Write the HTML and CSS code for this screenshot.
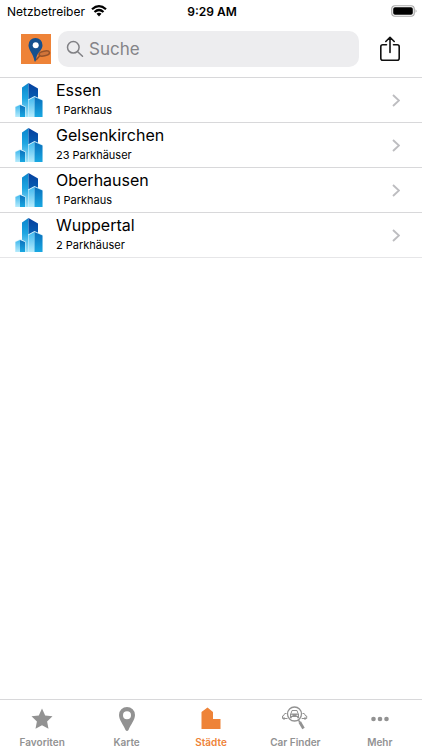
FILE: index.html
```html
<!DOCTYPE html>
<html lang="de">
<head>
<meta charset="utf-8">
<meta name="viewport" content="width=device-width, initial-scale=1">
<title>Städte</title>
<link rel="stylesheet" href="styles.css">
</head>
<body>
<svg class="defs" aria-hidden="true">
  <defs>
    <linearGradient id="tower" x1="0" y1="0" x2="0" y2="1"><stop offset="0" stop-color="#0a84cc"/><stop offset=".45" stop-color="#1ea6e2"/><stop offset="1" stop-color="#a5e4fa"/></linearGradient>
    <linearGradient id="dark" x1="0" y1="0" x2="0" y2="1"><stop offset="0" stop-color="#063f9e"/><stop offset="1" stop-color="#0660b4"/></linearGradient>
    <linearGradient id="side" x1="0" y1="0" x2="0" y2="1"><stop offset="0" stop-color="#0a6fbc"/><stop offset="1" stop-color="#18a8e2"/></linearGradient>
    <linearGradient id="light" x1="0" y1="0" x2="0" y2="1"><stop offset="0" stop-color="#3fb8ee"/><stop offset="1" stop-color="#b5ebfc"/></linearGradient>
    <symbol id="city" viewBox="0 0 28 36">
      <path fill="url(#tower)" d="M7 5.500 13.500 1v34H7z"/>
      <path fill="url(#dark)" d="M13.500 1 23 6.500v11H13.500z"/>
      <path fill="#d9f3fc" d="M13 17.500 19.500 14 27.500 17.700V35H13zM0 24.500 5.500 22 10.500 24.500V35H0z"/>
      <path fill="url(#light)" d="M13.500 18.200 19.500 15V35h-6z"/>
      <path fill="url(#side)" d="M19.500 15 27.500 18.500V35h-8z"/>
      <path fill="url(#light)" d="M.5 25 5 23V35H.5z"/>
      <path fill="url(#side)" d="M5 23 10 25V35H5z"/>
    </symbol>
    <symbol id="chevron" viewBox="0 0 8 13"><path d="M1 1 7 6.500 1 12" fill="none" stroke="#bdbdc0" stroke-width="1.900"/></symbol>
  </defs>
</svg>
<div class="status">
  <div class="carrier"><span>Netzbetreiber</span>
    <svg width="16" height="12" viewBox="0 0 16 12" aria-hidden="true"><g fill="none" stroke="#000" stroke-width="2.200"><path d="M1 4.300Q8-2 15 4.300M3.500 7Q8 3 12.500 7"/></g><path d="M5.500 8.800Q8 6.800 10.500 8.800L8 11.500z"/></svg>
  </div>
  <div class="time">9:29 AM</div>
  <svg class="battery" width="26" height="12" viewBox="0 0 26 12" aria-hidden="true"><rect x=".75" y=".75" width="22.500" height="10.500" rx="3.200" fill="#fff" stroke="#aaa" stroke-width="1.200"/><rect x="2.200" y="2.200" width="19.600" height="7.600" rx="1.800"/><path d="M24.600 4.200q1.800 1.800 0 3.600z" fill="#999"/></svg>
</div>
<header class="header">
  <svg class="logo" width="30" height="30" viewBox="0 0 30 30" role="img" aria-label="Parken"><path fill="#ee8338" d="M0 0h30v30H0z"/><path d="M15 26 19.500 21" stroke="#8c4c28" stroke-width="1.500"/><ellipse cx="23.300" cy="19.500" rx="5.300" ry="2.400" transform="rotate(-12 23.300 19.500)" fill="#d0743a" stroke="#94522a" stroke-width="1.500"/><path fill="#14508e" d="M14.500 4a7 7 0 0 0-7 7.200c0 5 4.700 8 6 16q.5.800 1.300-.2c.4-4 1.300-6.500 3.200-8.700 2.300-2.600 3.500-4.600 3.500-7.100a7 7 0 0 0-7-7.200z"/><circle cx="14.700" cy="11.300" r="3" fill="#fff"/></svg>
  <label class="search">
    <svg width="18" height="18" viewBox="0 0 18 18" aria-hidden="true"><g fill="none" stroke="#808084" stroke-width="1.500" stroke-linecap="round"><circle cx="7.300" cy="7.300" r="5.800"/><path d="m11.700 11.700 4.800 4.500"/></g></svg>
    <input type="search" placeholder="Suche" aria-label="Suche">
  </label>
  <button class="share" type="button" aria-label="Teilen"><svg width="22" height="26" viewBox="0 0 22 26"><g fill="none" stroke="#111" stroke-width="1.600" stroke-linecap="round" stroke-linejoin="round"><path d="M7.500 8.800H3.800Q1.800 8.800 1.800 10.800v11.400q0 2 2 2h14.400q2 0 2-2V10.800q0-2-2-2h-3.700M11 16.500V1.500M6.800 5.500 11 1.300l4.200 4.200"/></g></svg></button>
</header>
<main class="main">
  <ul class="list">
    <li><a class="row" href="#essen"><svg class="city"><use href="#city"/></svg><span class="text"><span class="name">Essen</span><span class="count">1 Parkhaus</span></span><svg class="chevron"><use href="#chevron"/></svg></a></li>
    <li><a class="row" href="#gelsenkirchen"><svg class="city"><use href="#city"/></svg><span class="text"><span class="name">Gelsenkirchen</span><span class="count">23 Parkhäuser</span></span><svg class="chevron"><use href="#chevron"/></svg></a></li>
    <li><a class="row" href="#oberhausen"><svg class="city"><use href="#city"/></svg><span class="text"><span class="name">Oberhausen</span><span class="count">1 Parkhaus</span></span><svg class="chevron"><use href="#chevron"/></svg></a></li>
    <li><a class="row" href="#wuppertal"><svg class="city"><use href="#city"/></svg><span class="text"><span class="name">Wuppertal</span><span class="count">2 Parkhäuser</span></span><svg class="chevron"><use href="#chevron"/></svg></a></li>
  </ul>
</main>
<nav class="tabs">
  <a class="tab" href="#favoriten"><svg width="28" height="28" viewBox="0 0 28 28"><path fill="currentColor" d="m14 3.500 3.200 6.900 7.300.9-5.400 5.100 1.400 7.400-6.500-3.600-6.500 3.600 1.400-7.400-5.400-5.100 7.300-.9z"/></svg><span>Favoriten</span></a>
  <a class="tab" href="#karte"><svg width="28" height="28" viewBox="0 0 28 28"><path fill="currentColor" fill-rule="evenodd" d="M14 2a8 8 0 0 0-8 8c0 5 4.300 9.500 6.500 15q1.500 2.200 3 0C17.700 19.500 22 15 22 10a8 8 0 0 0-8-8zm0 4.200a4 4 0 1 1 0 8 4 4 0 0 1 0-8z"/></svg><span>Karte</span></a>
  <a class="tab active" href="#staedte" aria-current="page"><svg width="28" height="28" viewBox="0 0 28 28"><path fill="currentColor" d="M4.500 7 10.500 2.500 16 7v7h7.500v10h-19z"/></svg><span>Städte</span></a>
  <a class="tab" href="#car-finder"><svg width="28" height="28" viewBox="0 0 28 28"><g fill="none" stroke="currentColor"><circle cx="13.500" cy="9" r="7" stroke-width="1.300"/><path d="m17.500 15 1.200 2.200" stroke-width="1.500"/><path d="m18.700 17 3.800 6.500" stroke-width="2.800"/><path d="M10 8.500 11 5.500h5l1 3M5.500 8.500H3.800L2.300 11H1.500v2.500h5M21.500 8.500h1.700l1.500 2.500h1v2.500h-5"/></g><path fill="currentColor" d="M9 8.500h9v4.700h-1.800V12h-5.400v1.200H9zM2 12.500h2v2H2zM23 12.500h2v2h-2z"/><path stroke="#fff" d="M10 10.300h1.500m4 0H17"/></svg><span>Car Finder</span></a>
  <a class="tab" href="#mehr"><svg width="28" height="28" viewBox="0 0 28 28"><g fill="currentColor"><circle cx="7.500" cy="14" r="2.300"/><circle cx="14" cy="14" r="2.300"/><circle cx="20.500" cy="14" r="2.300"/></g></svg><span>Mehr</span></a>
</nav>
</body>
</html>
```
FILE: styles.css
```css
* { box-sizing: border-box; }

body {
  margin: 0;
  min-height: 100vh;
  display: flex;
  flex-direction: column;
  background: #fff;
  color: #000;
  font-family: Inter, "Liberation Sans", sans-serif;
}

svg { display: block; flex: none; }
a { color: inherit; text-decoration: none; }

.defs { position: absolute; width: 0; height: 0; }

.status {
  display: grid;
  grid-template-columns: 1fr auto 1fr;
  align-items: center;
  height: 22px;
  padding: 0 5px 0 7px;
  font-size: 12px;
}
.carrier { display: flex; align-items: center; gap: 6px; }
.time { font-weight: 600; }
.battery { justify-self: end; }

.header {
  display: flex;
  align-items: center;
  height: 56px;
  padding: 0 21px 2px;
  border-bottom: 1px solid #d8d8da;
}
.search {
  flex: 1;
  min-width: 0;
  display: flex;
  align-items: center;
  gap: 5px;
  height: 36px;
  margin: 0 20px 0 7px;
  padding: 0 8px;
  border-radius: 10px;
  background: #ededef;
}
.search input {
  flex: 1;
  min-width: 0;
  padding: 0;
  border: 0;
  outline: 0;
  background: none;
  font: inherit;
  font-size: 17px;
  appearance: none;
}
.search input::placeholder { color: #848488; opacity: 1; }
.share { padding: 0; border: 0; background: none; }

.main { flex: 1; }
.list { margin: 0; padding: 0; list-style: none; }
.row {
  display: flex;
  align-items: center;
  height: 45px;
  padding: 0 22px 0 15px;
  border-bottom: 1px solid #d8d8da;
}
.list li:last-child .row { border-color: #e6e6e8; }
.city { width: 28px; height: 36px; }
.text { flex: 1; margin-left: 13px; }
.name, .count { display: block; line-height: 20px; }
.name { font-size: 16px; }
.count { font-size: 11px; }
.chevron { width: 8px; height: 13px; }

.tabs {
  display: flex;
  height: 51px;
  padding-top: 5px;
  border-top: 1px solid #d8d8da;
}
.tab {
  flex: 1 1 0;
  min-width: 0;
  display: flex;
  flex-direction: column;
  align-items: center;
  color: #929292;
  font-size: 10px;
  font-weight: 600;
  line-height: 18px;
}
.active { color: #ee8338; }
```
